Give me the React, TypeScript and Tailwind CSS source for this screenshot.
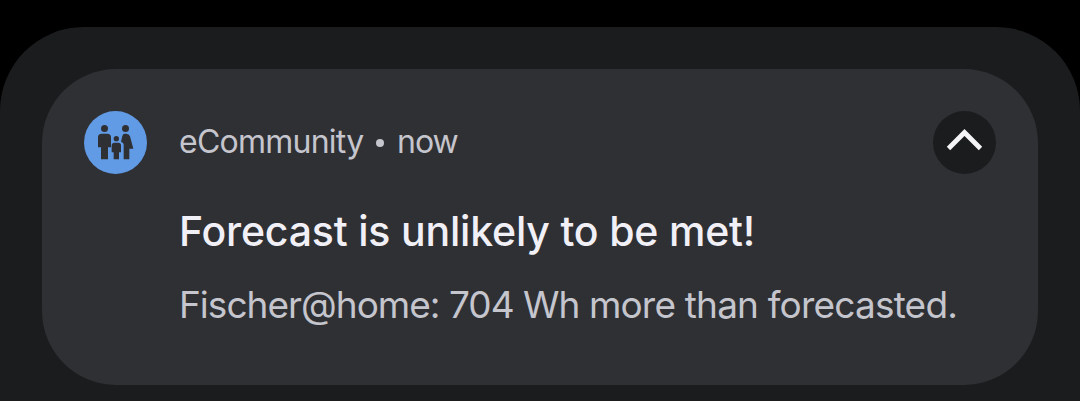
function FamilyIcon() {
  return (
    <svg viewBox="0 0 189 189" className="size-[63px] shrink-0" aria-hidden="true">
      <circle cx="94.5" cy="94.5" r="94.5" fill="#619be6" />
      <g transform="translate(-27 -27)" fill="#2f3034">
        <circle cx="88.5" cy="79.5" r="10.5" />
        <path d="M80 95H97Q108 95 108 106V136H99V172H78V136H69V106Q69 95 80 95Z" />
        <circle cx="151.500" cy="79.5" r="10.5" />
        <path d="M149 95H154Q162 95 165 103L175 140H163V172H146V126Q144 121 138 119L142 102Q144 95 149 95Z" />
        <circle cx="124" cy="110" r="8" />
        <path d="M119 122H130Q138 122 138 130V151H132V172H116V151H110V130Q110 122 119 122Z" />
      </g>
    </svg>
  );
}

function CollapseButton() {
  return (
    <button aria-label="Collapse" className="flex size-[63px] shrink-0 items-center justify-center rounded-full bg-[#1b1c1e]">
      <svg viewBox="0 0 63 63" className="size-[63px]" fill="none" stroke="#f4f3f6" strokeWidth="4.8">
        <path d="M15.500 37.500L31.500 21.500L47.500 37.500" />
      </svg>
    </button>
  );
}

export default function App() {
  return (
    <main className="h-[401px] w-[1080px] overflow-hidden bg-black pt-[27px] font-['Inter',sans-serif]">
      <section className="h-[374px] rounded-t-[84px] bg-[#1b1c1e] px-[42px] pt-[42px]">
        <article className="h-[316px] rounded-[74px] bg-[#2f3034] px-[42px] pt-[42px]">
          <header className="flex h-[63px] items-center">
            <FamilyIcon />
            <div className="ml-8 flex flex-1 items-center whitespace-nowrap text-[32px] leading-[40px] text-[#c5c5cd]">
              <span className="-mt-px w-[197px] tracking-[-0.75px]">eCommunity</span>
              <span className="mr-[13px] size-[8px] rounded-full bg-[#c5c5cd]" />
              <span className="-mt-px tracking-[-1px]">now</span>
            </div>
            <CollapseButton />
          </header>
          <h1 className="mt-[31px] ml-[95px] whitespace-nowrap text-[41px] leading-[52px] font-medium tracking-[-0.19px] text-[#f2f0f7]">
            Forecast is unlikely to be met!
          </h1>
          <p className="mt-[25px] ml-[95px] whitespace-nowrap text-[37px] leading-[46px] tracking-[-0.86px] text-[#c5c5cd]">
            <span className="tracking-[-0.98px]">Fischer@home: 704 Wh </span>
            <span className="tracking-[-0.8px]">more than forecasted.</span>
          </p>
        </article>
      </section>
    </main>
  );
}
